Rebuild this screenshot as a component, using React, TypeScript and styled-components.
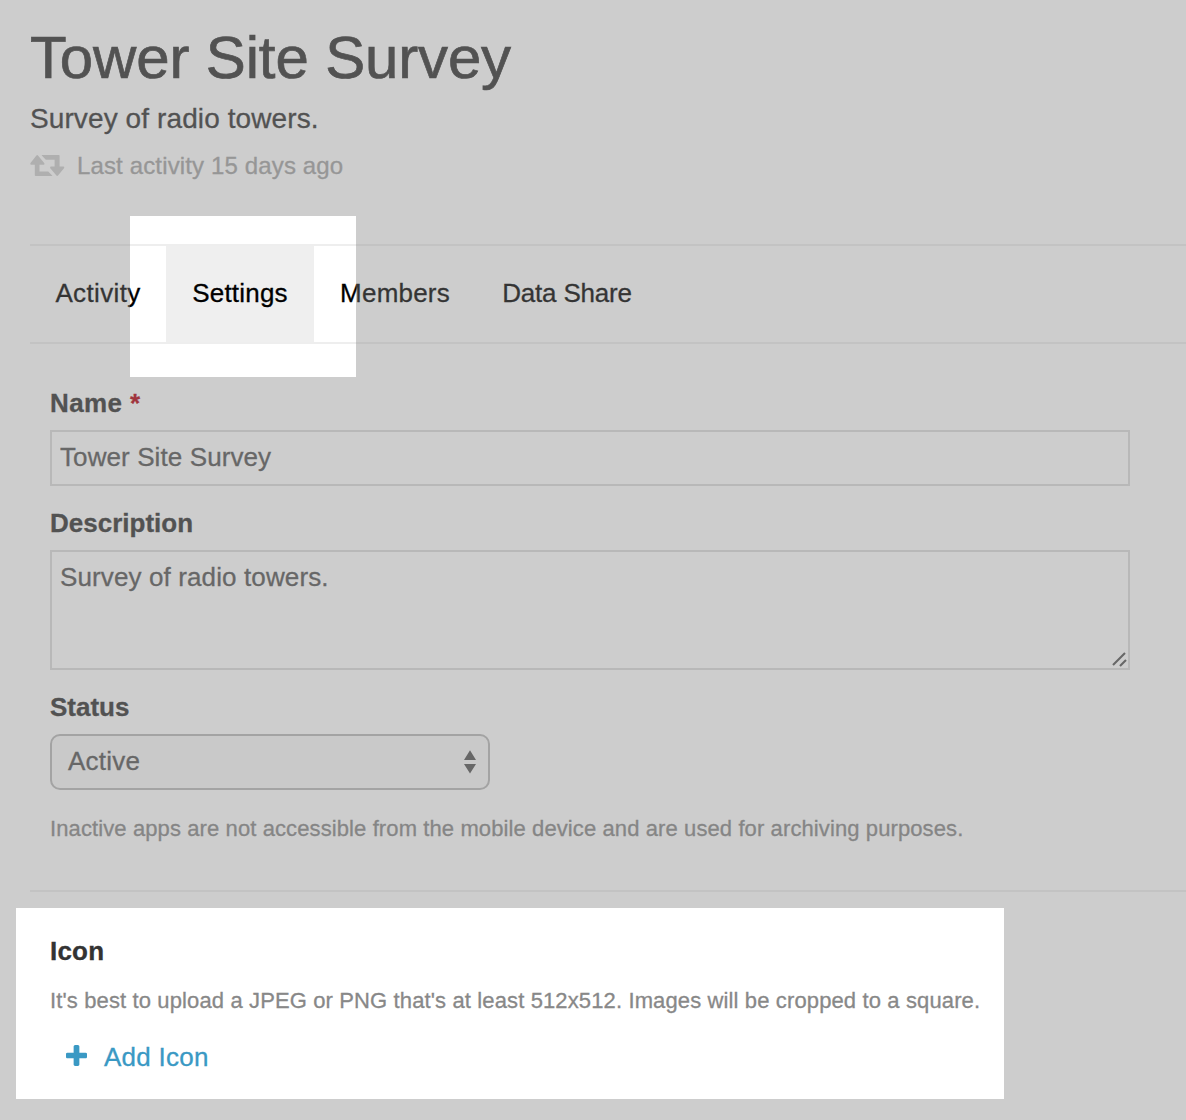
import React from "react";
import styled, { createGlobalStyle } from "styled-components";

const GlobalStyle = createGlobalStyle`
  *, *::before, *::after { box-sizing: border-box; }
  body {
    margin: 0;
    background: #fff;
    color: #333;
    font-family: "Liberation Sans", Arial, Helvetica, sans-serif;
    -webkit-font-smoothing: antialiased;
    -webkit-text-stroke: 0.3px currentColor;
  }
  h1, h2, p { margin: 0; }
`;

const Page = styled.div`
  position: relative;
  height: 1120px;
  padding: 22px 0 0 30px;
  overflow: hidden;
`;

const Header = styled.header`
  display: flex;
  flex-direction: column;
  height: 222px;
  white-space: nowrap;
`;

const Title = styled.h1`
  font-size: 60px;
  line-height: 71px;
  font-weight: 400;
  letter-spacing: -0.15px;
  -webkit-text-stroke-width: 0.7px;
`;

const Subtitle = styled.p`
  margin-top: 5px;
  font-size: 28px;
  line-height: 41px;
  letter-spacing: 0.1px;
`;

const LastActivity = styled.p`
  display: flex;
  align-items: center;
  gap: 12px;
  margin-top: 9px;
  font-size: 24px;
  line-height: 35px;
  letter-spacing: 0.14px;
  color: #a4a4a4;
`;

const RetweetIcon = styled.svg`
  width: 35px;
  height: 21px;
  fill: #cecece;
`;

const Tabs = styled.nav`
  display: grid;
  grid-template-columns: 136px 148px 162px 182px;
  height: 100px;
  border-top: 2px solid #eee;
  border-bottom: 2px solid #eee;
`;

const Tab = styled.a<{ $active?: boolean; $tracking: number }>`
  padding-bottom: 2px;
  background: ${(p) => (p.$active ? "#efefef" : "transparent")};
  color: #000;
  font-size: 26px;
  line-height: 94px;
  text-align: center;
  letter-spacing: ${(p) => p.$tracking}px;
  white-space: nowrap;
`;

const Section = styled.section<{ $divided?: boolean }>`
  display: flex;
  flex-direction: column;
  align-items: flex-start;
  padding: 41px 0 46px 20px;
  border-bottom: ${(p) => (p.$divided ? "2px solid #eee" : "none")};
`;

const Field = styled.div`
  display: flex;
  flex-direction: column;
  gap: 9px;
  margin-bottom: 19px;

  &:last-of-type { margin-bottom: 0; }
`;

const Label = styled.label<{ $tracking?: number }>`
  font-size: 26px;
  line-height: 36px;
  font-weight: 700;
  letter-spacing: ${(p) => p.$tracking ?? 0}px;
`;

const Required = styled.span`
  color: #b5000f;
`;

const TextInput = styled.input`
  width: 1080px;
  height: 56px;
  padding: 0 8px 2px;
  border: 2px solid #dcdcdc;
  border-radius: 0;
  background: #fff;
  color: #555;
  font: 400 26px/50px "Liberation Sans", Arial, sans-serif;
  letter-spacing: 0.1px;
  outline: none;
`;

const AreaWrap = styled.div`
  position: relative;
  display: flex;
  width: 1080px;
  height: 120px;
`;

const TextArea = styled.textarea`
  flex: 1;
  padding: 10px 8px;
  border: 2px solid #dcdcdc;
  border-radius: 0;
  background: #fff;
  color: #555;
  font: 400 26px/30px "Liberation Sans", Arial, sans-serif;
  letter-spacing: 0.12px;
  resize: none;
  outline: none;
`;

const Grip = styled.svg`
  position: absolute;
  right: 3px;
  bottom: 3px;
  width: 15px;
  height: 15px;
  stroke: #555;
  stroke-width: 2.1;
`;

const SelectBox = styled.div`
  display: flex;
  align-items: center;
  justify-content: space-between;
  width: 440px;
  height: 56px;
  padding: 0 12px 0 16px;
  border: 2px solid #b9b9b9;
  border-radius: 10px;
  background: #f8f8f8;
  color: #555;
  font-size: 26px;
  line-height: 50px;
  letter-spacing: 0.25px;
`;

const SelectValue = styled.span`
  padding-bottom: 2px;
`;

const SelectArrows = styled.svg`
  width: 12px;
  height: 24px;
  fill: #555;
`;

const Hint = styled.p<{ $top: number; $tracking: number }>`
  margin-top: ${(p) => p.$top}px;
  color: #888;
  font-size: 22px;
  line-height: 31px;
  letter-spacing: ${(p) => p.$tracking}px;
  white-space: nowrap;
`;

const SectionTitle = styled.h2`
  font-size: 26px;
  line-height: 36px;
  font-weight: 700;
  letter-spacing: 0.2px;
`;

const AddButton = styled.a`
  display: flex;
  align-items: center;
  gap: 17px;
  margin: 23px 0 0 16px;
  color: #3a99c4;
  font-size: 26px;
  line-height: 36px;
  letter-spacing: 0.25px;
`;

const PlusIcon = styled.svg`
  width: 21px;
  height: 21px;
  margin-bottom: 3px;
  fill: currentColor;
`;

/* Dimming layer with two rectangular cut-outs: the active tab and the icon section. */
const Spotlight = styled.div`
  position: absolute;
  inset: 0;
  background: rgba(129, 129, 129, 0.4);
  pointer-events: none;
  clip-path: path(
    evenodd,
    "M0 0H1186V1120H0Z M130 216H356V377H130Z M16 908H1004V1099H16Z"
  );
`;

const tabs = [
  { name: "Activity", tracking: 0.35 },
  { name: "Settings", tracking: 0.2 },
  { name: "Members", tracking: 0.2 },
  { name: "Data Share", tracking: -0.2 },
];

export default function App() {
  return (
    <>
      <GlobalStyle />
      <Page>
        <Header>
          <Title>Tower Site Survey</Title>
          <Subtitle>Survey of radio towers.</Subtitle>
          <LastActivity>
            <RetweetIcon viewBox="0 0 35 21">
              <path d="M6.4 0.5Q7.2 -0.3 8 0.5L14.2 8Q15 9.6 13.6 9.8H9.5V16.4H18.2L22.2 20.4Q22.5 21 21.9 21H5.6Q4.8 21 4.8 20.2V9.8H1.2Q-0.2 9.6 0.5 8Z" />
              <path d="M12 0H28.8Q29.6 0 29.6 0.8V11.5H33.4Q34.7 11.7 34 13.2L28 20.5Q27.2 21.3 26.4 20.5L20.3 13.2Q19.7 11.7 21 11.5H24.6V4.7H15.8L11.8 0.6Q11.5 0 12 0Z" />
            </RetweetIcon>
            Last activity 15 days ago
          </LastActivity>
        </Header>

        <Tabs>
          {tabs.map(({ name, tracking }) => (
            <Tab key={name} $active={name === "Settings"} $tracking={tracking}>
              {name}
            </Tab>
          ))}
        </Tabs>

        <Section $divided>
          <Field>
            <Label htmlFor="name" $tracking={0.4}>
              Name <Required>*</Required>
            </Label>
            <TextInput id="name" defaultValue="Tower Site Survey" />
          </Field>
          <Field>
            <Label htmlFor="description">Description</Label>
            <AreaWrap>
              <TextArea id="description" defaultValue="Survey of radio towers." />
              <Grip viewBox="0 0 15 15">
                <path d="M1 13L13 1M8 14L14 8" />
              </Grip>
            </AreaWrap>
          </Field>
          <Field>
            <Label>Status</Label>
            <SelectBox>
              <SelectValue>Active</SelectValue>
              <SelectArrows viewBox="0 0 12 24">
                <path d="M6 0.3L12 10H0ZM0 14H12L6 23.5Z" />
              </SelectArrows>
            </SelectBox>
          </Field>
          <Hint $top={23} $tracking={0.105}>
            Inactive apps are not accessible from the mobile device and are used for archiving purposes.
          </Hint>
        </Section>

        <Section>
          <SectionTitle>Icon</SectionTitle>
          <Hint $top={16} $tracking={0.127}>
            It's best to upload a JPEG or PNG that's at least 512x512. Images will be cropped to a square.
          </Hint>
          <AddButton>
            <PlusIcon viewBox="0 192 1408 1408">
              <path d="M1408 800v192q0 40-28 68t-68 28h-416v416q0 40-28 68t-68 28h-192q-40 0-68-28t-28-68v-416h-416q-40 0-68-28t-28-68v-192q0-40 28-68t68-28h416v-416q0-40 28-68t68-28h192q40 0 68 28t28 68v416h416q40 0 68 28t28 68z" />
            </PlusIcon>
            Add Icon
          </AddButton>
        </Section>

        <Spotlight />
      </Page>
    </>
  );
}
